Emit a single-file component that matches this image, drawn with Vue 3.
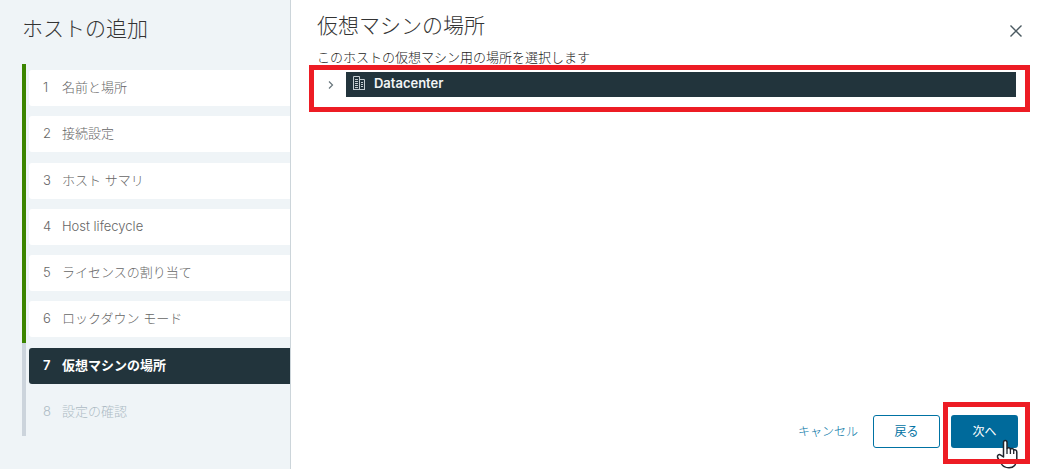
<script setup>
const steps = [
  { label: '名前と場所', state: 'done' },
  { label: '接続設定', state: 'done' },
  { label: 'ホスト サマリ', state: 'done' },
  { label: 'Host lifecycle', state: 'done' },
  { label: 'ライセンスの割り当て', state: 'done' },
  { label: 'ロックダウン モード', state: 'done' },
  { label: '仮想マシンの場所', state: 'current' },
  { label: '設定の確認', state: 'pending' },
]
</script>

<template>
  <div class="wizard">
    <aside class="sidebar">
      <h1 class="title">ホストの追加</h1>
      <nav class="steps">
        <div class="rail"><span class="rail-done"></span><span class="rail-todo"></span></div>
        <ol class="step-list">
          <li v-for="(step, i) in steps" :key="step.label">
            <button
              type="button"
              class="step"
              :class="step.state"
              :disabled="step.state === 'pending'"
              :aria-current="step.state === 'current' ? 'step' : undefined"
            >
              <span class="num">{{ i + 1 }}</span>
              <span>{{ step.label }}</span>
            </button>
          </li>
        </ol>
      </nav>
    </aside>

    <main class="content">
      <header class="header">
        <h2 class="title">仮想マシンの場所</h2>
        <button type="button" class="close" aria-label="閉じる">
          <svg width="14" height="14" viewBox="0 0 14 14" aria-hidden="true">
            <path d="M1.5 1.5 L12.5 12.5 M12.5 1.5 L1.5 12.5" fill="none" stroke="#4a5960" stroke-width="1.4" />
          </svg>
        </button>
      </header>
      <p class="description">このホストの仮想マシン用の場所を選択します</p>

      <div class="tree marked">
        <button type="button" class="caret" aria-label="展開">
          <svg width="8" height="10" viewBox="0 0 8 10" aria-hidden="true">
            <path d="M2 1.5 L5.5 5 L2 8.5" fill="none" stroke="#68757b" stroke-width="1.2" />
          </svg>
        </button>
        <button type="button" class="node">
          <svg width="14" height="15" viewBox="0 0 14 15" aria-hidden="true">
            <g fill="none" stroke="#c3cdd1" stroke-width="1">
              <path d="M1.5 13.5 V0.5 H7.5 V13.5 M7.5 3.5 H12.5 V13.5 M1 13.5 H13" />
              <path d="M3 3.5 H6 M3 5.5 H6 M3 7.5 H6 M3 9.5 H6 M3 11.5 H6 M9 6.5 H11 M9 8.5 H11 M9 10.5 H11" />
            </g>
          </svg>
          <span>Datacenter</span>
        </button>
      </div>

      <footer class="footer">
        <button type="button" class="btn link">キャンセル</button>
        <button type="button" class="btn outline">戻る</button>
        <div class="next marked">
          <button type="button" class="btn primary">次へ</button>
          <svg class="pointer" width="22" height="30" viewBox="0 0 22 30" aria-hidden="true">
            <path
              d="M7.5 18 V3.5 C7.5 0.8 11 0.8 11 3.5 V9.5 C12 8.2 14.2 8.5 14.4 10.2 C15.5 9 17.4 9.5 17.7 11 C19.3 10.2 20.8 11.2 20.8 13 V20 C20.5 25.5 17.5 28.8 13 28.8 C9 28.8 6.5 27 4.8 24 L1.6 18.5 C0.8 16.2 3.2 14.8 4.8 16.2 Z"
              fill="#fff"
              stroke="#20242c"
              stroke-width="1.5"
              stroke-linejoin="round"
            />
            <path d="M11 9.5 V15 M14.4 10 V15 M17.7 11 V15" fill="none" stroke="#20242c" stroke-width="1.3" />
            <path d="M0 20 H22 V25 H0 Z" fill="#ed1c24" />
          </svg>
        </div>
      </footer>
    </main>
  </div>
</template>

<style>
body {
  margin: 0;
  background: #fff;
}
</style>

<style scoped>
.wizard {
  display: flex;
  box-sizing: border-box;
  height: 100vh;
  padding-bottom: 2px;
  font-family: Inter, "Noto Sans CJK JP", sans-serif;
  font-size: 13px;
  line-height: 20px;
  color: #565656;
}
button {
  margin: 0;
  padding: 0;
  border: 0;
  background: none;
  font: inherit;
  color: inherit;
  cursor: pointer;
}
svg {
  display: block;
  flex: none;
}
.title {
  margin: 0;
  font-size: 21px;
  font-weight: 300;
  line-height: 32px;
  color: #333;
}
.sidebar {
  flex: 0 0 28%;
  box-sizing: border-box;
  padding: 13px 0 0 22px;
  background: #eff4f7;
  border-right: 1px solid #ccd5da;
}
.steps {
  display: flex;
  gap: 3px;
  height: 372px;
  margin-top: 19px;
}
.rail {
  display: flex;
  flex-direction: column;
  width: 4px;
}
.rail-done {
  flex: 3;
  background: #3c8500;
}
.rail-todo {
  flex: 1;
  background: #ccd4dc;
}
.step-list {
  flex: 1;
  display: grid;
  grid-auto-rows: 1fr;
  margin: 0;
  padding: 1px 0;
  list-style: none;
}
.step-list li {
  padding-top: 5px;
}
.step {
  box-sizing: border-box;
  display: flex;
  align-items: center;
  width: 100%;
  height: 36px;
  padding-left: 14px;
  padding-bottom: 2px;
  border-radius: 3px 0 0 3px;
  font-weight: 300;
  color: #666;
  text-align: left;
}
.num {
  width: 19px;
}
.done {
  background: #fff;
}
.current {
  background: #22343c;
  color: #fff;
  font-weight: 600;
}
.pending {
  color: #adbbc4;
}
.content {
  flex: 1;
  display: flex;
  flex-direction: column;
  padding: 10px 9px 5px 18px;
}
.header {
  display: flex;
  justify-content: space-between;
  padding-left: 8px;
}
.close {
  width: 28px;
  height: 42px;
  margin-bottom: -10px;
  display: grid;
  place-items: center;
}
.description {
  margin: 5px 0 0 8px;
  font-weight: 300;
  color: #222;
}
.marked {
  border: 5px solid #ed1c24;
}
.tree {
  display: flex;
  align-items: flex-start;
  margin-top: -2px;
  padding: 2px 9px 10px 12px;
}
.caret {
  display: grid;
  place-items: center;
  width: 10px;
  height: 25px;
  margin-right: 10px;
}
.node {
  flex: 1;
  display: flex;
  align-items: center;
  gap: 8px;
  height: 25px;
  padding: 0 6px 3px;
  background: #22343c;
  color: #f2f5f6;
  font-weight: 600;
}
.footer {
  display: flex;
  align-items: baseline;
  justify-content: flex-end;
  margin-top: auto;
}
.btn {
  box-sizing: border-box;
  height: 33px;
  border-radius: 3px;
  font-size: 12px;
  color: #0072a3;
}
.link {
  margin-right: 15px;
  font-weight: 300;
}
.outline {
  width: 67px;
  margin-right: 3px;
  border: 1px solid #0072a3;
}
.primary {
  width: 67px;
  background: #006a9b;
  color: #fff;
}
.next {
  position: relative;
  padding: 8px 7px 11px 3px;
}
.pointer {
  position: absolute;
  right: 7px;
  bottom: -10px;
}
</style>
